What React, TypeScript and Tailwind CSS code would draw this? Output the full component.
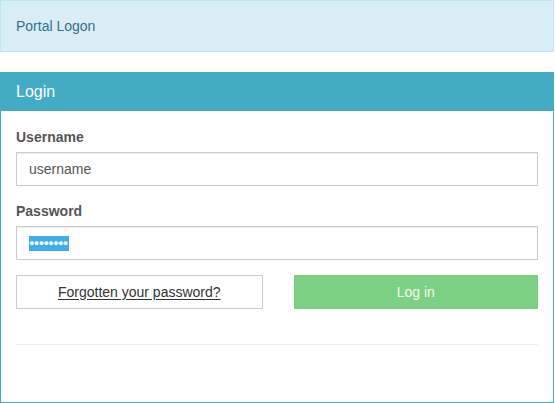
export default function App() {
  return (
    <div className="w-[554px] bg-white font-['Liberation_Sans',Arial,sans-serif] text-[14px] text-[#333]">
      <div className="flex h-[52px] items-center border border-[#bce8f1] bg-[#d9edf7] px-[15px] text-[#31708f]">
        Portal Logon
      </div>

      <div className="mt-5 flex h-[331px] flex-col border border-t-0 border-[#43acc4]">
        <div className="-mx-px flex h-[39px] items-center bg-[#43acc4] px-4 text-[16px] text-white">Login</div>
        <div className="px-[15px] pt-4">
          <div className="mb-[15px]">
            <label className="mb-[5px] block h-5 leading-5 font-bold text-[#555]">Username</label>
            <div className="flex h-[34px] items-center border border-[#ccc] px-3 text-[#555] shadow-[inset_0_1px_1px_rgba(0,0,0,0.075)]">
              username
            </div>
          </div>
          <div className="mb-[15px]">
            <label className="mb-[5px] block h-5 leading-5 font-bold text-[#555]">Password</label>
            <div className="flex h-[34px] items-center border border-[#ccc] px-3 shadow-[inset_0_1px_1px_rgba(0,0,0,0.075)]">
              <span className="flex h-[15px] items-center bg-[#3daee9] pr-px text-[9px] leading-none tracking-[-0.6px] text-white">
                ●●●●●●●●
              </span>
            </div>
          </div>
          <div className="flex gap-[31px]">
            <button className="h-[34px] flex-1 border border-[#ccc] bg-white text-[#333] underline underline-offset-2">
              Forgotten your password?
            </button>
            <button className="h-[34px] flex-1 bg-[#7dd184] text-[#f4fbf4]">Log in</button>
          </div>
          <hr className="mt-[35px] border-[#eee]" />
        </div>
      </div>
    </div>
  );
}
